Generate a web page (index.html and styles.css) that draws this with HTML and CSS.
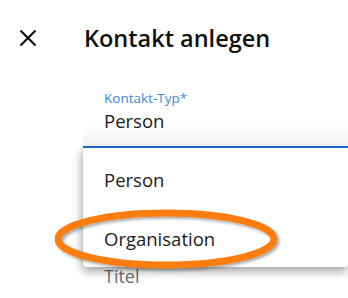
FILE: index.html
```html
<!DOCTYPE html>
<html lang="de">
<head>
    <meta charset="UTF-8">
    <meta name="viewport" content="width=device-width, initial-scale=1.0">
    <title>Kontakt anlegen</title>
    <link rel="stylesheet" href="styles.css">
</head>
<body>
    <header class="topbar">
        <button class="close" aria-label="Schließen">
            <svg width="18" height="18" viewBox="0 0 18 18">
                <path d="M1.5 1.5 L16.5 16.5 M16.5 1.5 L1.5 16.5" stroke="#111" stroke-width="2.2" fill="none"/>
            </svg>
        </button>
        <h1>Kontakt anlegen</h1>
    </header>

    <main class="form">
        <div class="field active">
            <label class="field-label">Kontakt-Typ*</label>
            <div class="field-value">Person</div>
        </div>
        <div class="field next">
            <label class="field-label">Titel</label>
        </div>

        <ul class="menu">
            <li>Person</li>
            <li>Organisation</li>
        </ul>
    </main>

    <svg class="highlight" width="240" height="80" viewBox="0 0 240 80">
        <defs>
            <filter id="shade" x="-10%" y="-30%" width="120%" height="160%">
                <feDropShadow dx="2" dy="2" stdDeviation="1.5" flood-color="#000" flood-opacity="0.35"/>
            </filter>
        </defs>
        <ellipse cx="111" cy="34" rx="108" ry="26" fill="none" stroke="#fb7d0c" stroke-width="7" filter="url(#shade)"/>
    </svg>
</body>
</html>
```

FILE: styles.css
```css
body {
    margin: 0;
    background-color: #fff;
    font-family: "Open Sans", "Noto Sans", sans-serif;
    color: #1b1b1b;
    position: relative;
    height: 298px;
    overflow: hidden;
}
.topbar {
    display: flex;
    align-items: flex-start;
    box-sizing: border-box;
    height: 80px;
    padding: 18px 0 0 19px;
}
.close {
    border: none;
    background: none;
    padding: 0;
    width: 18px;
    height: 18px;
    margin-top: 11px;
}
.close svg {
    display: block;
}
h1 {
    margin: 0 0 0 47px;
    font-size: 23.5px;
    line-height: 40px;
    font-weight: 600;
    color: #111;
}
.form {
    position: relative;
    padding-left: 83px;
}
.field {
    padding-left: 21px;
}
.field.active {
    height: 68px;
    box-sizing: border-box;
    padding-top: 10px;
    border-bottom: 2px solid #1a6fc9;
    background: linear-gradient(to bottom, #fff 65%, #f3f3f3);
}
.field-label {
    display: block;
    font-size: 13.5px;
    line-height: 17px;
    color: #3e8ad8;
}
.field-value {
    margin-top: 2px;
    font-size: 18.5px;
    line-height: 24px;
}
.field.next {
    padding-top: 116px;
}
.field.next .field-label {
    font-size: 18px;
    line-height: 24px;
    color: #6f6f6f;
}
.menu {
    position: absolute;
    top: 68px;
    left: 83px;
    right: 0;
    margin: 0;
    padding: 2px 0 0;
    list-style: none;
    background-color: #fff;
    border-radius: 0 0 4px 4px;
    box-shadow: 0 5px 10px rgba(0, 0, 0, 0.28), -3px 2px 8px rgba(0, 0, 0, 0.12);
}
.menu li {
    height: 59px;
    line-height: 59px;
    padding-left: 21px;
    font-size: 18.5px;
    color: #1b1b1b;
}
.menu li:last-child {
    height: 58px;
}
.highlight {
    position: absolute;
    left: 55px;
    top: 205px;
}
```
